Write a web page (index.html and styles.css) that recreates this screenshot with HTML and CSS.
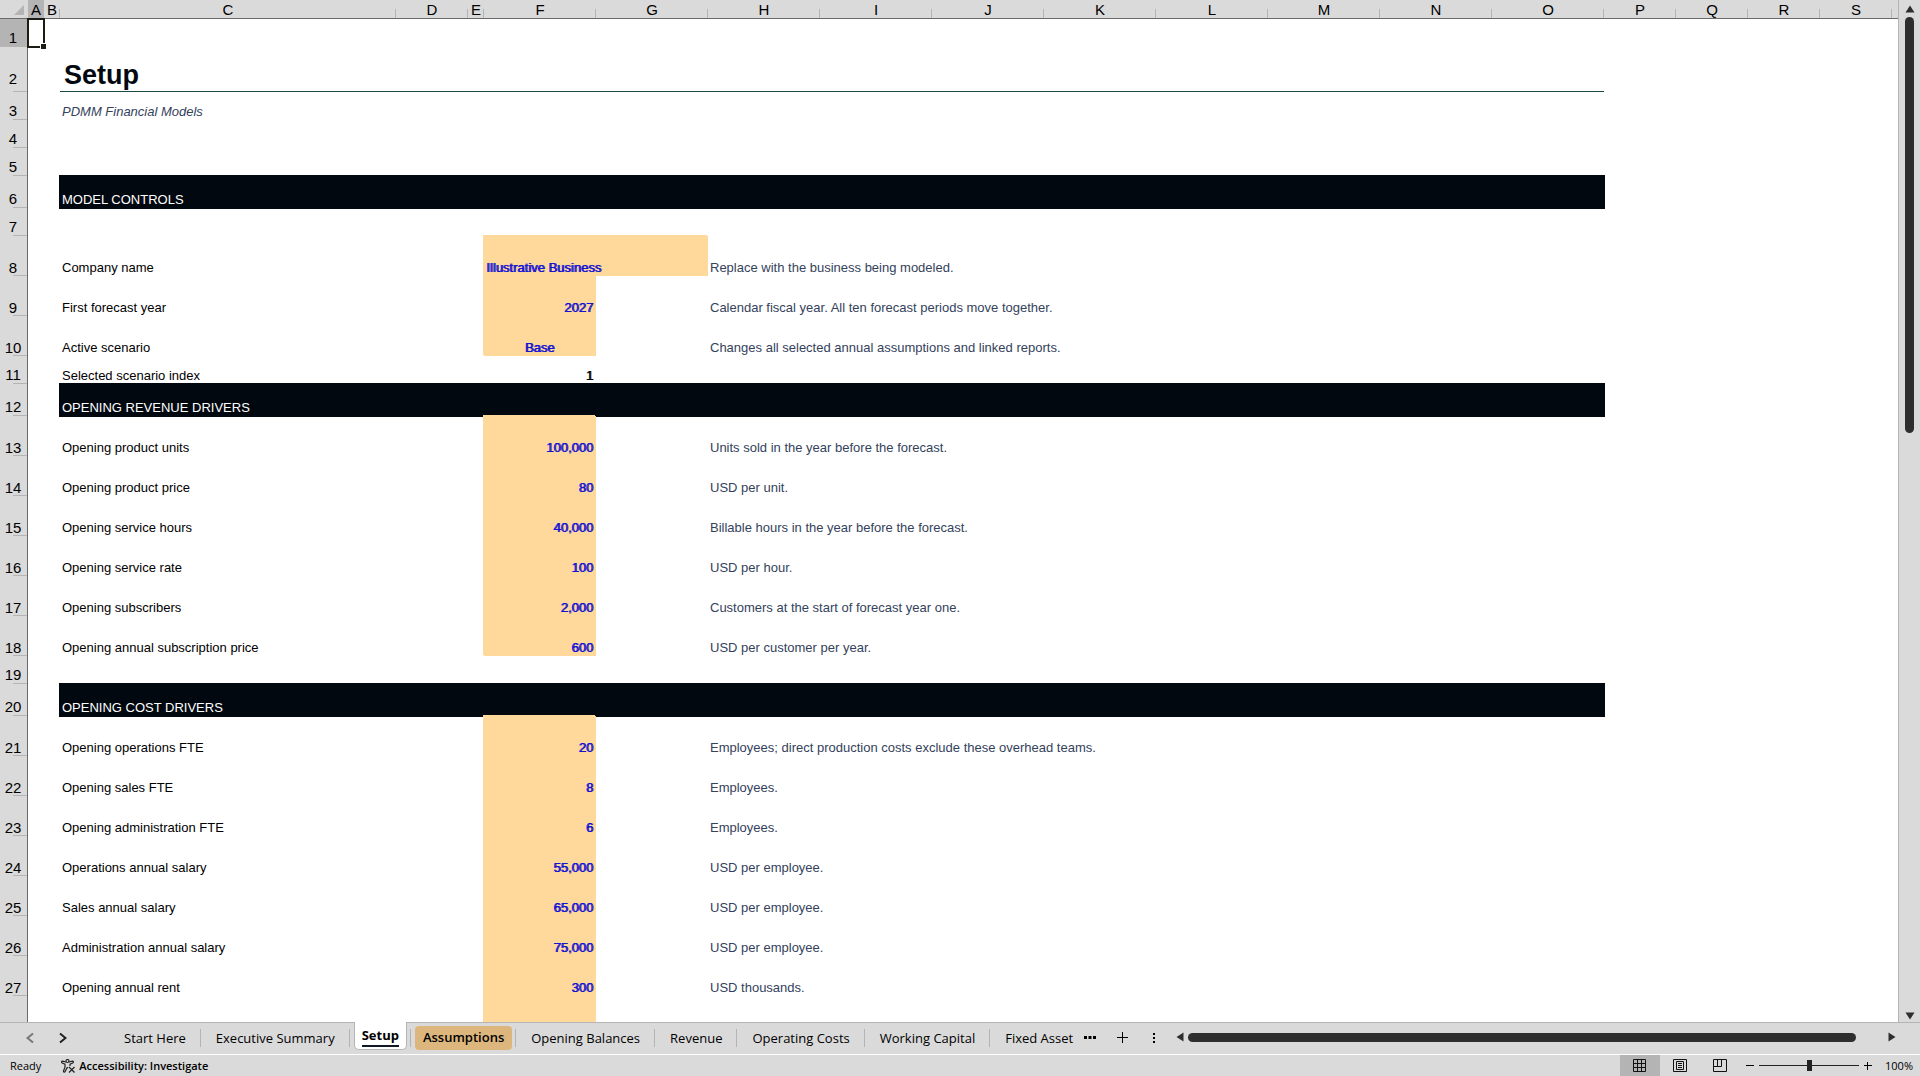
FILE: index.html
```
<!DOCTYPE html>
<html lang="en">
<head>
  <title>Setup</title>
  <meta charset="UTF-8">
  <meta name="viewport" content="width=device-width, initial-scale=1">
  <link rel="stylesheet" href="styles.css">
</head>
<body>
  <main class="workspace">
    <div class="grid-area">
      <table class="sheet">
        <colgroup>
          <col class="col-head">
          <col class="col-xs">
          <col class="col-xs">
          <col class="col-label">
          <col class="col-sm">
          <col class="col-xs">
          <col class="col-year" span="10">
          <col class="col-sm" span="4">
          <col>
        </colgroup>
        <thead>
          <tr>
            <th class="corner"><svg viewBox="0 0 10 10" width="10" height="10"><path d="M10 0v10H0z" fill="#b4b4b4"/></svg></th>
            <th class="current">A</th><th>B</th><th>C</th><th>D</th><th>E</th><th>F</th><th>G</th><th>H</th><th>I</th><th>J</th><th>K</th><th>L</th><th>M</th><th>N</th><th>O</th><th>P</th><th>Q</th><th>R</th><th>S</th><th class="rest"></th>
          </tr>
        </thead>
        <tbody>
          <tr><th class="current">1</th><td class="active-cell"></td><td colspan="19"></td></tr>
          <tr class="row-title"><th>2</th><td></td><td></td><td class="title" colspan="13"><h1>Setup</h1></td><td colspan="5"></td></tr>
          <tr><th>3</th><td></td><td></td><td class="subtitle" colspan="13">PDMM Financial Models</td><td colspan="5"></td></tr>
          <tr><th>4</th><td colspan="20"></td></tr>
          <tr><th>5</th><td colspan="20"></td></tr>
          <tr class="row-section"><th>6</th><td></td><td></td><td class="section" colspan="13">MODEL CONTROLS</td><td colspan="5"></td></tr>
          <tr><th>7</th><td colspan="20"></td></tr>
          <tr class="row-item"><th>8</th><td></td><td></td><td>Company name</td><td></td><td></td><td class="entry text" colspan="2">Illustrative Business</td><td class="note" colspan="13">Replace with the business being modeled.</td></tr>
          <tr class="row-item"><th>9</th><td></td><td></td><td>First forecast year</td><td></td><td></td><td class="entry">2027</td><td></td><td class="note" colspan="13">Calendar fiscal year. All ten forecast periods move together.</td></tr>
          <tr class="row-item"><th>10</th><td></td><td></td><td>Active scenario</td><td></td><td></td><td class="entry choice">Base</td><td></td><td class="note" colspan="13">Changes all selected annual assumptions and linked reports.</td></tr>
          <tr><th>11</th><td></td><td></td><td>Selected scenario index</td><td></td><td></td><td class="calc">1</td><td colspan="14"></td></tr>
          <tr class="row-section"><th>12</th><td></td><td></td><td class="section" colspan="13">OPENING REVENUE DRIVERS</td><td colspan="5"></td></tr>
          <tr class="row-item"><th>13</th><td></td><td></td><td>Opening product units</td><td></td><td></td><td class="entry">100,000</td><td></td><td class="note" colspan="13">Units sold in the year before the forecast.</td></tr>
          <tr class="row-item"><th>14</th><td></td><td></td><td>Opening product price</td><td></td><td></td><td class="entry">80</td><td></td><td class="note" colspan="13">USD per unit.</td></tr>
          <tr class="row-item"><th>15</th><td></td><td></td><td>Opening service hours</td><td></td><td></td><td class="entry">40,000</td><td></td><td class="note" colspan="13">Billable hours in the year before the forecast.</td></tr>
          <tr class="row-item"><th>16</th><td></td><td></td><td>Opening service rate</td><td></td><td></td><td class="entry">100</td><td></td><td class="note" colspan="13">USD per hour.</td></tr>
          <tr class="row-item"><th>17</th><td></td><td></td><td>Opening subscribers</td><td></td><td></td><td class="entry">2,000</td><td></td><td class="note" colspan="13">Customers at the start of forecast year one.</td></tr>
          <tr class="row-item"><th>18</th><td></td><td></td><td>Opening annual subscription price</td><td></td><td></td><td class="entry">600</td><td></td><td class="note" colspan="13">USD per customer per year.</td></tr>
          <tr><th>19</th><td colspan="20"></td></tr>
          <tr class="row-section"><th>20</th><td></td><td></td><td class="section" colspan="13">OPENING COST DRIVERS</td><td colspan="5"></td></tr>
          <tr class="row-item"><th>21</th><td></td><td></td><td>Opening operations FTE</td><td></td><td></td><td class="entry">20</td><td></td><td class="note" colspan="13">Employees; direct production costs exclude these overhead teams.</td></tr>
          <tr class="row-item"><th>22</th><td></td><td></td><td>Opening sales FTE</td><td></td><td></td><td class="entry">8</td><td></td><td class="note" colspan="13">Employees.</td></tr>
          <tr class="row-item"><th>23</th><td></td><td></td><td>Opening administration FTE</td><td></td><td></td><td class="entry">6</td><td></td><td class="note" colspan="13">Employees.</td></tr>
          <tr class="row-item"><th>24</th><td></td><td></td><td>Operations annual salary</td><td></td><td></td><td class="entry">55,000</td><td></td><td class="note" colspan="13">USD per employee.</td></tr>
          <tr class="row-item"><th>25</th><td></td><td></td><td>Sales annual salary</td><td></td><td></td><td class="entry">65,000</td><td></td><td class="note" colspan="13">USD per employee.</td></tr>
          <tr class="row-item"><th>26</th><td></td><td></td><td>Administration annual salary</td><td></td><td></td><td class="entry">75,000</td><td></td><td class="note" colspan="13">USD per employee.</td></tr>
          <tr class="row-item"><th>27</th><td></td><td></td><td>Opening annual rent</td><td></td><td></td><td class="entry">300</td><td></td><td class="note" colspan="13">USD thousands.</td></tr>
          <tr class="row-item"><th></th><td></td><td></td><td></td><td></td><td></td><td class="entry"></td><td></td><td class="note" colspan="13"></td></tr>
        </tbody>
      </table>
    </div>
    <div class="scroll-y">
      <button class="arrow" aria-label="Scroll up"><svg viewBox="0 0 10 8" width="10" height="8"><path d="M5 0.5 9.5 7.5h-9z"/></svg></button>
      <div class="track"><div class="thumb"></div></div>
      <button class="arrow" aria-label="Scroll down"><svg viewBox="0 0 10 8" width="10" height="8"><path d="M5 7.5 9.5 0.5h-9z"/></svg></button>
    </div>
  </main>

  <nav class="tab-bar">
    <div class="tab-nav">
      <button class="dim" aria-label="Previous sheet"><svg viewBox="0 0 8 12" width="8" height="12"><path d="M7 1.500 1.500 6 7 10.500"/></svg></button>
      <button aria-label="Next sheet"><svg viewBox="0 0 8 12" width="8" height="12"><path d="M1 1.500 6.500 6 1 10.500"/></svg></button>
    </div>
    <div class="tabs">
      <button class="tab">Start Here</button>
      <button class="tab">Executive Summary</button>
      <button class="tab selected"><span>Setup</span></button>
      <button class="tab tinted"><span>Assumptions</span></button>
      <button class="tab">Opening Balances</button>
      <button class="tab">Revenue</button>
      <button class="tab">Operating Costs</button>
      <button class="tab">Working Capital</button>
      <button class="tab last">Fixed Asset</button>
    </div>
    <div class="tab-tools">
      <button aria-label="More sheets"><svg viewBox="0 0 12 4" width="12" height="4"><path d="M0 0h3v3H0zM4.500 0h3v3h-3zM9 0h3v3H9z"/></svg></button>
      <button aria-label="New sheet"><svg viewBox="0 0 12 12" width="12" height="12"><path d="M5 0h1v5h5v1H6v5H5V6H0V5h5z"/></svg></button>
      <button aria-label="Resize tabs"><svg viewBox="0 0 8 12" width="8" height="12"><path d="M3 1h2v2H3zM3 5h2v2H3zM3 9h2v2H3z"/></svg></button>
    </div>
    <div class="scroll-x">
      <button class="arrow" aria-label="Scroll left"><svg viewBox="0 0 8 10" width="8" height="10"><path d="M0.500 5 7.500 0.500v9z"/></svg></button>
      <div class="track"><div class="thumb"></div></div>
      <button class="arrow" aria-label="Scroll right"><svg viewBox="0 0 8 10" width="8" height="10"><path d="M7.500 5 0.500 0.500v9z"/></svg></button>
    </div>
  </nav>

  <footer class="status-bar">
    <span class="ready">Ready</span>
    <button class="a11y">
      <svg viewBox="0 0 14 14" width="14" height="14" fill="none" stroke="#222" stroke-width="1.200"><circle cx="6.500" cy="2" r="1.500"/><path d="M5 3 1.500 2.200C.3 2.200.3 3.600 1.200 4L4 5.200v3L2.500 12c-.2 1.200 1 1.600 1.500.7L6 9l1-.8M8 3l3.500-.8c1.200 0 1.200 1.400.3 1.800L9 5.200V7M8 8l5.500 5.500M13.500 8 8 13.500"/></svg>
      Accessibility: Investigate
    </button>
    <div class="views">
      <button class="on" aria-label="Normal view"><svg viewBox="0 0 14 14" width="14" height="14" fill="none" stroke="#111"><path d="M.5.500h12v12H.5zM4.500.500v12M8.500.500v12M.5 4.500h12M.5 8.500h12"/></svg></button>
      <button aria-label="Page layout"><svg viewBox="0 0 14 14" width="14" height="14" fill="none" stroke="#111"><path d="M.5.500h13v12H.5zM3.500 2.500h7v8h-7zM5 4.500h4M5 6.500h4M5 8.500h4"/></svg></button>
      <button aria-label="Page break preview"><svg viewBox="0 0 14 14" width="14" height="14" fill="none" stroke="#111"><path d="M.5.500h13v12H.5zM.5 7.500h8v-7M4.500.500v7"/></svg></button>
    </div>
    <div class="zoom">
      <button aria-label="Zoom out"><svg viewBox="0 0 8 8" width="8" height="8"><path d="M0 3h8v1H0z"/></svg></button>
      <input type="range" min="10" max="190" value="100" aria-label="Zoom">
      <button aria-label="Zoom in"><svg viewBox="0 0 8 8" width="8" height="8"><path d="M0 3h8v1H0zM4 0v8H3V0z"/></svg></button>
      <button class="percent">100%</button>
    </div>
  </footer>
</body>
</html>
```
FILE: styles.css
```
:root {
  --chrome: #dadada;
  --line: #b4b4b4;
  --edge: #6a6a6a;
  --band: #02080f;
  --input: #ffd99b;
  --blue: #1414d2;
  --note: #34425c;
  --dark: #2e2e2e;
}

* {
  box-sizing: border-box;
}

body {
  margin: 0;
  height: 100vh;
  display: flex;
  flex-direction: column;
  overflow: hidden;
  background: var(--chrome);
  color: #000;
  font-family: 'Liberation Sans', Arial, sans-serif;
  font-size: 13px;
}

button {
  margin: 0;
  padding: 0;
  border: none;
  background: none;
  color: inherit;
  font: inherit;
  display: flex;
  align-items: center;
  justify-content: center;
}

svg {
  display: block;
  flex: none;
}

/* sheet */
.workspace {
  flex: 1;
  min-height: 0;
  display: flex;
}

.grid-area {
  flex: 1;
  min-width: 0;
  overflow: hidden;
  background: #fff;
  border-right: 1px solid var(--line);
}

.sheet {
  width: 100%;
  table-layout: fixed;
  border-collapse: separate;
  border-spacing: 0;
}

.col-head { width: 28px; }
.col-xs { width: 16px; }
.col-sm { width: 72px; }
.col-label { width: 336px; }
.col-year { width: 112px; }

.sheet th,
.sheet td {
  padding: 0 3px;
  line-height: 16px;
  vertical-align: bottom;
  white-space: nowrap;
}

.sheet td {
  padding-left: 2px;
}

.sheet th {
  padding: 0;
  background: var(--chrome);
  font-size: 15px;
  font-weight: normal;
}

.sheet thead th {
  height: 19px;
  border-bottom: 1px solid var(--edge);
  background: linear-gradient(var(--line), var(--line)) right bottom / 1px 9px no-repeat var(--chrome);
}

.sheet thead .corner {
  padding: 0 3px 3px 14px;
  background: var(--chrome);
}

.sheet thead .rest {
  background: var(--chrome);
}

.sheet thead .current,
.sheet tbody .current {
  background: var(--line);
}

.sheet tbody tr {
  height: 28px;
}

.sheet tbody th {
  padding: 0 1px 1px 0;
  border-right: 1px solid var(--edge);
  background: linear-gradient(var(--line), var(--line)) right bottom / 14px 1px no-repeat var(--chrome);
}

.sheet .row-title { height: 45px; }
.sheet .row-section { height: 32px; }
.sheet .row-item { height: 40px; }

.sheet .row-item th {
  padding-bottom: 0;
}

.sheet .row-title th {
  padding-bottom: 5px;
}

.active-cell {
  outline: 2px solid #1c1c14;
  outline-offset: -1px;
  position: relative;
}

.active-cell::after {
  content: "";
  position: absolute;
  right: -2px;
  bottom: -2px;
  width: 5px;
  height: 5px;
  background: #1c1c14;
  border: solid #fff;
  border-width: 1px 0 0 1px;
  box-sizing: content-box;
}

.sheet .title {
  padding-left: 4px;
  border-bottom: 1px solid #1d4a43;
}

.title h1 {
  margin: 0;
  font-size: 27px;
  line-height: 32px;
  color: var(--band);
}

.subtitle {
  font-style: italic;
  color: var(--note);
}

.section {
  background: var(--band);
  color: #fff;
  box-shadow: 0 0 0 1px var(--band);
}

.entry {
  background: var(--input);
  box-shadow: -1px -1px var(--input);
  color: var(--blue);
  text-align: right;
  text-shadow: 1px 0 var(--blue);
}

.entry.text { text-align: left; }
.entry.choice { text-align: center; }

.calc {
  text-align: right;
  text-shadow: 1px 0 #000;
}

.note {
  color: var(--note);
}

/* scrollbars */
.arrow svg {
  fill: var(--dark);
}

.thumb {
  background: var(--dark);
  border-radius: 5px;
}

.scroll-y {
  width: 21px;
  padding: 5px 0 2px;
  display: flex;
  flex-direction: column;
  align-items: center;
  gap: 4px;
}

.scroll-y .track {
  flex: 1;
}

.scroll-y .thumb {
  width: 9px;
  height: 42%;
}

.scroll-x {
  flex: 1;
  display: flex;
  align-items: center;
  gap: 4px;
  padding: 0 24px 3px 0;
}

.scroll-x .track {
  flex: 1;
}

.scroll-x .thumb {
  width: 96%;
  height: 9px;
}

/* sheet tabs */
.tab-bar {
  height: 32px;
  display: flex;
  border-top: 1px solid var(--line);
  font-family: 'Open Sans', 'Noto Sans', sans-serif;
  font-size: 13px;
}

.tab-nav {
  width: 109px;
  display: flex;
  gap: 25px;
  padding: 0 0 1px 26px;
}

.tab-nav svg {
  fill: none;
  stroke: #222;
  stroke-width: 2;
}

.tab-nav .dim svg {
  stroke: #777;
}

.tabs {
  display: flex;
}

.tab {
  position: relative;
  padding: 0 15px 2px;
  line-height: 20px;
  white-space: nowrap;
}

.tab::after {
  content: "";
  position: absolute;
  right: 0;
  top: 6px;
  width: 1px;
  height: 18px;
  background: var(--line);
}

.tab.selected {
  padding: 0 4px;
  font-weight: bold;
  align-items: flex-start;
}

.tab.selected span {
  height: 28px;
  margin-top: -1px;
  padding: 3px 7px 0;
  background: #fff;
  border: 1px solid var(--line);
  border-top: none;
  border-radius: 0 0 5px 5px;
}

.tab.selected span::after {
  content: "";
  display: block;
  height: 2px;
  background: #111827;
}

.tab.tinted {
  padding: 0 4px;
  font-weight: 600;
  align-items: flex-start;
}

.tab.tinted span {
  height: 24px;
  margin-top: 3px;
  padding: 1px 8px;
  background: #dcb67c;
  border-radius: 4px;
}

.tab.last {
  padding-right: 0;
}

.tab.last::after {
  display: none;
}

.tab-tools {
  display: flex;
  gap: 21px;
  padding: 0 18px 2px 11px;
}

/* status bar */
.status-bar {
  height: 22px;
  display: flex;
  border-top: 1px solid #fff;
  font-family: 'Open Sans', 'Noto Sans', sans-serif;
  font-size: 11px;
}

.ready {
  padding-left: 10px;
  line-height: 22px;
}

.a11y {
  margin-left: 20px;
  gap: 4px;
  font-weight: 600;
}

.views {
  margin-left: auto;
  display: flex;
}

.views button {
  width: 40px;
}

.views .on {
  background: var(--line);
}

.zoom {
  display: flex;
  align-items: center;
  gap: 5px;
  padding: 0 7px 0 6px;
}

.zoom input {
  width: 100px;
  height: 20px;
  margin: 0;
  appearance: none;
  background: linear-gradient(#222, #222) center / 100% 1px no-repeat;
}

.zoom input::-webkit-slider-thumb {
  appearance: none;
  width: 5px;
  height: 11px;
  background: #222;
}

.zoom .percent {
  margin-left: 8px;
}
```
